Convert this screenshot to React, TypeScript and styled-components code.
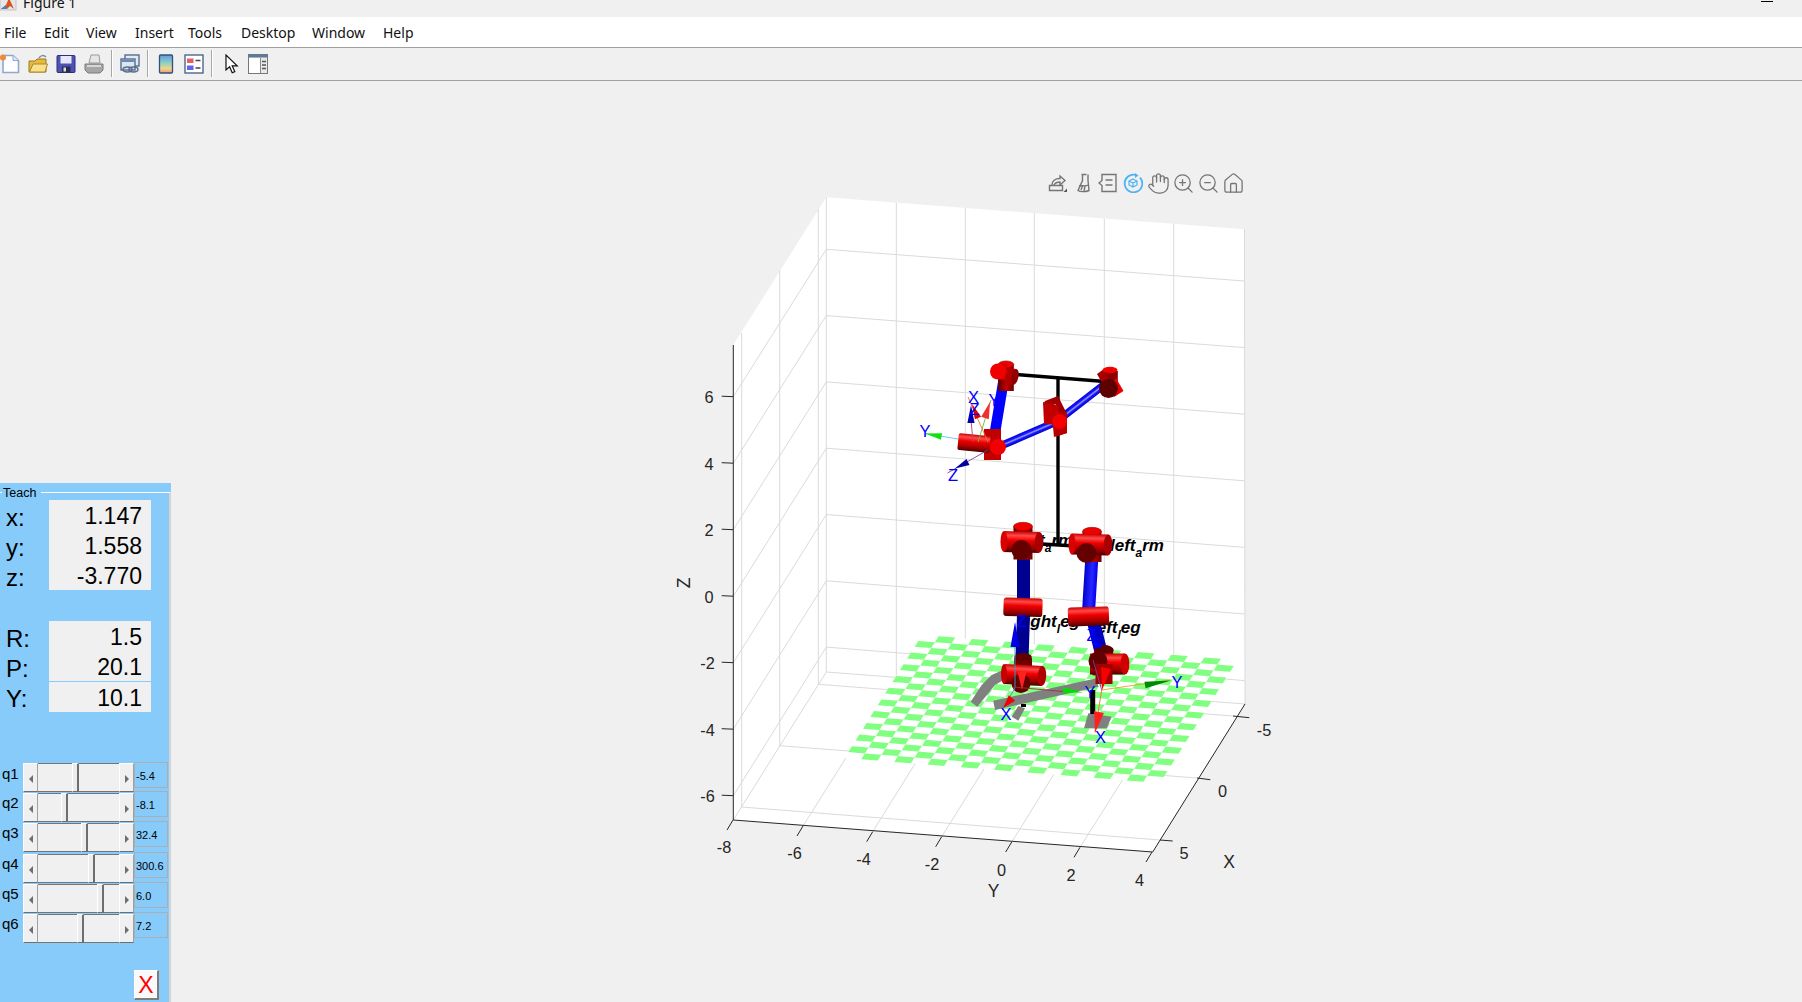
import React from "react";
import styled, { createGlobalStyle } from "styled-components";
import { Hand, House, ZoomIn, ZoomOut } from "lucide-react";

const Global = createGlobalStyle`
  html, body { margin: 0; padding: 0; background: #f0f0f0; overflow: hidden; }
  #root { width: 1802px; height: 1002px; }
`;

const Page = styled.div`
  width: 1802px; height: 1002px; display: flex; flex-direction: column;
  background: #f0f0f0; overflow: hidden; font-family: "Liberation Sans", Arial, sans-serif;
`;
const TitleBar = styled.div`
  height: 17px; flex: none; display: flex; align-items: flex-start; overflow: hidden; background: #f0f0f0;
`;
const TitleIcon = styled.svg` width: 17px; height: 11px; flex: none; `;
const TitleText = styled.span`
  margin: -9px 0 0 6px; font: 14px/24px "Noto Sans", sans-serif; color: #111;
`;
const Minimize = styled.i`
  width: 12px; height: 1px; background: #000; margin: 1px 29px 0 auto; display: block;
`;
const MenuBar = styled.div`
  height: 30px; flex: none; background: #fff; border-bottom: 1px solid #a0a0a0; box-sizing: content-box;
  display: grid; grid-template-columns: 40px 42px 49px 53px 53px 71px 71px 1fr; padding-left: 4px; align-items: center;
`;
const MenuItem = styled.span`
  font: 14px/31px "Noto Sans", sans-serif; color: #111;
`;
const ToolBar = styled.div`
  height: 31px; flex: none; border-bottom: 1px solid #a0a0a0; display: flex; align-items: center; padding: 0 0 1px 0;
  box-sizing: content-box;
`;
const ToolGroup = styled.div<{ $gap: number }>`
  display: flex; gap: ${(p) => p.$gap}px;
`;
const ToolIcon = styled.svg` width: 20px; height: 20px; display: block; `;
const ToolSep = styled.i<{ $l: number; $r: number }>`
  display: block; width: 1px; height: 27px; background: #a8a8a8; border-right: 1px solid #fff;
  margin: 0 ${(p) => p.$r - 1}px 0 ${(p) => p.$l}px;
`;
const Main = styled.div` flex: 1; display: flex; min-height: 0; `;

/* ---------- Teach panel ---------- */
const Panel = styled.section`
  width: 171px; height: 519px; align-self: flex-end; flex: none; background: #87cbfb; position: relative;
  padding-top: 9px; box-sizing: border-box; display: flex;
`;
const PanelLegend = styled.span`
  position: absolute; left: 2px; top: 2px; padding: 0 5px 0 1px; background: #87cbfb;
  font: 12.5px/16px "Liberation Sans", sans-serif; color: #000;
`;
const PanelBody = styled.div`
  flex: 1; border-top: 1px solid #fff; border-right: 2px solid #d4d4d4; padding-top: 7px;
  display: flex; flex-direction: column; box-sizing: border-box;
`;
const Readouts = styled.div<{ $top?: number }>`
  display: grid; grid-template-columns: 49px 102px; margin-top: ${(p) => p.$top ?? 0}px;
`;
const ReadLabel = styled.span`
  font-size: 24px; line-height: 30px; color: #000; padding: 3px 0 0 6px; height: 30px; box-sizing: border-box; overflow: visible;
`;
const ReadValue = styled.span<{ $split?: boolean }>`
  background: #f0f0f0; font-size: 23px; line-height: 32px; height: 30px; text-align: right; padding-right: 9px; color: #000;
  ${(p) => (p.$split ? "margin-top:1px;" : "")}
`;
const SliderRow = styled.div<{ $pitch: number; $off: number }>`
  height: ${(p) => p.$pitch}px; display: grid; grid-template-columns: 23px 111px 34px; align-items: start;
  & > :nth-child(2) { margin-top: ${(p) => p.$off}px; }
`;
const SliderList = styled.div` margin-top: 50px; `;
const SliderLabel = styled.span`
  font-size: 15px; line-height: 20px; padding-left: 2px; margin-top: 2px; color: #000;
`;
const Slider = styled.div`
  height: 29px; display: flex; background: #f0f0f0; box-sizing: border-box;
`;
const SliderBtn = styled.div`
  width: 15px; flex: none; box-sizing: border-box; background: #f0f0f0;
  border: 1px solid; border-color: #fff #a0a0a0 #6e6e6e #fff; display: flex; align-items: center; justify-content: center;
`;
const ArrowL = styled.i`
  border-style: solid; border-width: 4px 4px 4px 0; border-color: transparent #6e6e6e transparent transparent; display: block; margin-top: 2px;
`;
const ArrowR = styled.i`
  border-style: solid; border-width: 4px 0 4px 4px; border-color: transparent transparent transparent #6e6e6e; display: block; margin-top: 2px;
`;
const Track = styled.div`
  flex: 1; position: relative; border-top: 1px solid #757575; border-bottom: 1px solid #757575; box-sizing: border-box;
`;
const Thumb = styled.div<{ $pos: number }>`
  position: absolute; top: -1px; bottom: -1px; left: ${(p) => p.$pos}px; width: 7px; box-sizing: border-box;
  background: #ececec; border-style: solid; border-width: 1px 2px 1px 1px; border-color: #fff #6e6e6e #6e6e6e #fff;
`;
const SliderValue = styled.span`
  height: 26px; border: 1px solid #abafb3; box-sizing: border-box; font-size: 11px; line-height: 26px; padding-left: 1px; color: #000; white-space: nowrap;
`;
const CloseBtn = styled.button`
  margin: 28px 0 0 134px; width: 25px; height: 30px; padding: 0; background: #f9f9f9; box-sizing: border-box;
  border: 1px solid; border-color: #fff #7d7d7d #7d7d7d #fff; border-width: 1px 2px 2px 1px;
  font: 23px/26px "Liberation Sans", sans-serif; color: #ff0000;
`;

/* ---------- plot ---------- */
const PlotArea = styled.div` flex: 1; position: relative; min-width: 0; `;
const PlotSvg = styled.svg` display: block; margin: 79px 0 0 489px; overflow: visible; `;
const AxesToolbar = styled.div`
  position: absolute; left: 877px; top: 92px; display: flex; gap: 5px; align-items: center;
`;
const AxesIcon = styled.svg` width: 20px; height: 20px; display: block; fill: none; stroke: #757575; stroke-width: 1.4; `;
const ActiveAxesIcon = styled(AxesIcon)` stroke: #4db2f5; `;
const lucideSized = `width: 23px; height: 23px; margin: -1.5px; color: #757575; stroke-width: 1.35; display: block;`;
const HandIcon = styled(Hand)`${lucideSized}`;
const ZoomInIcon = styled(ZoomIn)`${lucideSized}`;
const ZoomOutIcon = styled(ZoomOut)`${lucideSized}`;
const HomeIcon = styled(House)`${lucideSized}`;
const TickText = styled.text`
  font: 16.3px "Liberation Sans", sans-serif; fill: #262626; text-anchor: middle; dominant-baseline: central;
`;
const AxisName = styled(TickText)` font-size: 17.5px; `;
const FrameText = styled.text`
  font: 16.5px "Liberation Sans", sans-serif; fill: #0000ff; text-anchor: middle; dominant-baseline: central;
`;
const JointLabel = styled.text`
  font: italic bold 17px "Liberation Sans", sans-serif; fill: #000;
`;

/* geometry */
const A = [844.5, 758];
const U = [(1160 - 844.5) / 19, 25 / 19];
const V = [77.5 / 21, -123 / 21];
const pt = (i: number, j: number) => `${(A[0] + U[0] * i + V[0] * j).toFixed(1)} ${(A[1] + U[1] * i + V[1] * j).toFixed(1)}`;
let boardPath = "";
for (let i = 0; i < 19; i++) for (let j = 0; j < 21; j++) if ((i + j) % 2 === 1)
  boardPath += `M${pt(i, j)}L${pt(i + 1, j)}L${pt(i + 1, j + 1)}L${pt(i, j + 1)}Z`;

const GRID = "#dadada";
const zIdx = [0, 1, 2, 3, 4, 5, 6];
const yBack = (x: number, base: number) => base + ((x - 826) * 32) / 419;
const floorY: [number, number, number, number][] = [
  [803, 826, 896.3, 678], [872.7, 831.7, 965.3, 683], [941.7, 836.7, 1034.3, 688.5], [1011.7, 842, 1104.3, 693.5], [1080, 847.3, 1173.7, 699],
];

type CylP = { x1: number; y1: number; x2: number; y2: number; r: number; g?: string; cap?: string; };
const Cyl = ({ x1, y1, x2, y2, r, g = "url(#redG)", cap }: CylP) => {
  const len = Math.hypot(x2 - x1, y2 - y1);
  const a = (Math.atan2(y2 - y1, x2 - x1) * 180) / Math.PI;
  return (
    <g transform={`translate(${x1} ${y1}) rotate(${a})`}>
      <rect x={0} y={-r} width={len} height={2 * r} fill={g} />
      {cap && <ellipse cx={len} cy={0} rx={r * 0.42} ry={r} fill={cap} />}
    </g>
  );
};
const Disc = ({ x, y, r, f }: { x: number; y: number; r: number; f: string }) => <circle cx={x} cy={y} r={r} fill={f} />;
const Cone = ({ x1, y1, x2, y2, r, f }: { x1: number; y1: number; x2: number; y2: number; r: number; f: string }) => {
  const l = Math.hypot(x2 - x1, y2 - y1);
  const nx = (-(y2 - y1) / l) * r, ny = ((x2 - x1) / l) * r;
  return <polygon points={`${x1 + nx},${y1 + ny} ${x2},${y2} ${x1 - nx},${y1 - ny}`} fill={f} />;
};
const Thin = ({ d, c }: { d: string; c: string }) => <path d={d} stroke={c} strokeWidth={0.9} fill="none" />;

/* the four-way robot joint used at the shoulders of the lower body */
const CrossJoint = ({ x, y, capY, discX, discY, l, r }: { x: number; y: number; capY: number; discX: number; discY: number; l: number; r: number }) => (
  <g>
    <Cyl x1={x} y1={y + 18} x2={x} y2={capY} r={9.5} g="url(#darkV)" />
    <ellipse cx={x} cy={capY} rx={9.5} ry={4.2} fill="#f00000" stroke="#800000" strokeWidth={0.5} />
    <Cyl x1={l} y1={y} x2={r} y2={y + 1} r={10.5} cap="#a80000" />
    <ellipse cx={l} cy={y} rx={3.5} ry={10.5} fill="#d80000" />
    <Disc x={discX} y={discY} r={10} f="#640000" />
  </g>
);

const Plot = () => (
  <PlotSvg width={640} height={760} viewBox="660 160 640 760">
    <defs>
      <linearGradient id="redG" x1="0" y1="0" x2="0" y2="1">
        <stop offset="0" stopColor="#c80000" /><stop offset="0.2" stopColor="#ff4a4a" /><stop offset="0.42" stopColor="#f00000" /><stop offset="0.8" stopColor="#960000" /><stop offset="1" stopColor="#4a0000" />
      </linearGradient>
      <linearGradient id="darkV" x1="0" y1="0" x2="0" y2="1">
        <stop offset="0" stopColor="#600000" /><stop offset="0.55" stopColor="#c00000" /><stop offset="1" stopColor="#700000" />
      </linearGradient>
      <linearGradient id="blueG" x1="0" y1="0" x2="0" y2="1">
        <stop offset="0" stopColor="#0000d8" /><stop offset="0.32" stopColor="#1818ff" /><stop offset="0.5" stopColor="#9a9aff" /><stop offset="0.68" stopColor="#1818ff" /><stop offset="1" stopColor="#0000c0" />
      </linearGradient>
      <linearGradient id="blueS" x1="0" y1="0" x2="0" y2="1">
        <stop offset="0" stopColor="#0000f0" /><stop offset="0.4" stopColor="#2828ff" /><stop offset="1" stopColor="#0000d0" />
      </linearGradient>
    </defs>

    {/* walls and floor */}
    <polygon points="733.3,345 826.3,197.3 1244,229.3 1245,704 1152.7,852 733.3,820" fill="#fff" />
    <g stroke={GRID} strokeWidth={1} fill="none">
      <line x1={826.3} y1={197.3} x2={826.3} y2={672} />
      <line x1={826.3} y1={672} x2={733.3} y2={820} />
      <line x1={826.3} y1={672} x2={1245} y2={704} />
      <line x1={1244.5} y1={229.3} x2={1245} y2={704} />
      {zIdx.map((k) => (
        <path key={k} d={`M733.3 ${396.7 + 66.5 * k}L826.3 ${249.3 + 66.3 * k}L1244.5 ${281 + 66.6 * k}`} />
      ))}
      {[896.3, 965.3, 1034.3, 1104.3, 1173.7].map((x) => (
        <line key={x} x1={x} y1={yBack(x, 197.3)} x2={x} y2={yBack(x, 672)} />
      ))}
      <line x1={741.7} y1={333} x2={741.7} y2={807} />
      <line x1={779.7} y1={270} x2={779.7} y2={745.7} />
      <line x1={818.3} y1={209} x2={818.3} y2={684.3} />
      <line x1={741.7} y1={807} x2={1160} y2={840} />
      <line x1={779.7} y1={745.7} x2={1197} y2={778} />
      <line x1={818.3} y1={684.3} x2={1233} y2={716} />
      {floorY.map((l, i) => <line key={i} x1={l[0]} y1={l[1]} x2={l[2]} y2={l[3]} />)}
    </g>

    {/* axes */}
    <g stroke="#262626" strokeWidth={1} fill="none">
      <line x1={733.3} y1={345} x2={733.3} y2={820} />
      <line x1={733.3} y1={820} x2={1152.7} y2={852} />
      <line x1={1152.7} y1={852} x2={1245} y2={704} />
      {zIdx.map((k) => <line key={k} x1={721.7} y1={396.2 + 66.5 * k} x2={733.3} y2={396.7 + 66.5 * k} />)}
      {[[733, 820], [803, 826], [872.7, 831.7], [941.7, 836.7], [1011.7, 842], [1080, 847.3], [1152, 852]].map((t) => (
        <line key={t[0]} x1={t[0]} y1={t[1]} x2={t[0] - 6} y2={t[1] + 10} />
      ))}
      <line x1={1233} y1={716} x2={1249.3} y2={717.7} />
      <line x1={1197} y1={778} x2={1210.3} y2={779.7} />
      <line x1={1160} y1={840} x2={1172.7} y2={841} />
    </g>
    {[["6", 709, 396.5], ["4", 709, 463.5], ["2", 709, 530], ["0", 709, 596.5], ["-2", 707.5, 663], ["-4", 707.5, 729.5], ["-6", 707.5, 796]].map(([t, x, y]) => (
      <TickText key={t} x={x} y={y}>{t}</TickText>
    ))}
    {[["-8", 724, 847], ["-6", 794.5, 852.5], ["-4", 863.5, 858.5], ["-2", 932, 863.5], ["0", 1001.5, 869.5], ["2", 1071, 874.5], ["4", 1139.5, 879.5]].map(([t, x, y]) => (
      <TickText key={t} x={x} y={y}>{t}</TickText>
    ))}
    {[["-5", 1264, 730], ["0", 1222.5, 791], ["5", 1184, 852.5]].map(([t, x, y]) => (
      <TickText key={t} x={x} y={y}>{t}</TickText>
    ))}
    <AxisName x={993.5} y={890.5}>Y</AxisName>
    <AxisName x={1229} y={861.5}>X</AxisName>
    <AxisName x={683.5} y={583} transform="rotate(-90 683.5 583)">Z</AxisName>

    {/* ground */}
    <polygon points="844.5,758 922,635 1237.5,660.7 1160,783" fill="#fff" />
    <path d={boardPath} fill="#80ff80" />

    {/* feet */}
    <g fill="#808080">
      <polygon points="970.7,701.7 977.3,706.7 995,685 1005,679.3 1003,670 991.7,675 981.7,685" />
      <polygon points="993.3,700.7 995,710 1098.3,686.7 1096.7,678.3" />
      <polygon points="1011.7,716.7 1018.3,720.7 1025,708.3 1018.3,706" />
      <polygon points="1084,728.3 1106.7,728.3 1111.7,716.7 1088.3,713.3" />
    </g>
    <rect x={1090.2} y={690} width={5} height={24} fill="#000" />
    <rect x={1021} y={704} width={5} height={3} fill="#000" />

    {/* black skeleton */}
    <g stroke="#000" strokeWidth={3.4} fill="none">
      <line x1={1010} y1={374} x2={1108} y2={381.7} />
      <line x1={1058} y1={378} x2={1058} y2={545} />
      <line x1={1025} y1={543} x2={1092} y2={547} />
    </g>

    {/* labels behind the joints */}
    <JointLabel x={1007} y={546}>right<tspan dy={6} fontSize={12}>a</tspan><tspan dy={-6}>rm</tspan></JointLabel>
    <JointLabel x={1110} y={551}>left<tspan dy={6} fontSize={12}>a</tspan><tspan dy={-6}>rm</tspan></JointLabel>
    <JointLabel x={1019} y={627}>right<tspan dy={6} fontSize={12}>l</tspan><tspan dy={-6}>eg</tspan></JointLabel>
    <JointLabel x={1092} y={633}>left<tspan dy={6} fontSize={12}>l</tspan><tspan dy={-6}>eg</tspan></JointLabel>

    {/* upper arm links */}
    <Cyl x1={1004} y1={378} x2={995} y2={432} r={5.3} g="#0000ff" />
    <Cyl x1={998} y1={447} x2={1056} y2={422} r={3.9} g="url(#blueG)" />
    <Cyl x1={1056} y1={422} x2={1105} y2={384} r={3.9} g="url(#blueG)" />

    {/* shoulder */}
    <Cyl x1={1006} y1={391} x2={1006} y2={365} r={7.8} g="url(#darkV)" />
    <ellipse cx={1006} cy={364.5} rx={7.8} ry={3.6} fill="#f00000" stroke="#700000" strokeWidth={0.5} />
    <Cyl x1={1006} y1={375} x2={1015} y2={377} r={8} g="#b00000" cap="#900000" />
    <Cyl x1={1006} y1={372} x2={999} y2={371} r={8} g="#d80000" />
    <Disc x={998} y={371.5} r={8} f="#f00000" />

    {/* hand end */}
    <Cyl x1={1110} y1={390} x2={1110} y2={371} r={7.8} g="#8a0000" />
    <polygon points="1097,374 1104,369 1109,380 1102,383" fill="#a80000" />
    <ellipse cx={1110} cy={370} rx={7.5} ry={3.3} fill="#f00000" />
    <polygon points="1116,378 1123.5,391 1114,397 1108,388" fill="#e80000" />
    <Disc x={1108.5} y={388.5} r={9.5} f="#5c0000" />

    {/* mid */}
    <polygon points="1043,405 1056,404 1058,436 1067,433 1067,414 1058,396 1045,401" fill="#a00000" />
    <polygon points="1043,402 1058,405 1061,425 1044,424" fill="#c00000" />
    <polygon points="1052,416 1067,412 1067,433 1054,437" fill="#b80000" />
    <Disc x={1059.5} y={421.5} r={7.5} f="#f40000" />

    {/* elbow */}
    <Cyl x1={992.5} y1={429} x2={992.5} y2={460} r={8.5} g="#c00000" />
    <g transform="rotate(5.5 974 443)">
      <rect x={958} y={434.5} width={32} height={17} fill="url(#redG)" rx={2} />
    </g>
    <Disc x={998} y={447} r={8} f="#f00000" />

    {/* elbow frame */}
    <Thin d="M988 450L947.5 473" c="#8040a0" />
    <Thin d="M958 439L925 433.5" c="#50c8ff" />
    <Thin d="M973 442L971 420" c="#c04060" />
    <Thin d="M978 442L991 400" c="#70b040" />
    <Thin d="M988 442L968 397" c="#f07030" />
    <Cone x1={941.5} y1={436.5} x2={925} y2={433.5} r={3.4} f="#10e010" />
    <Cone x1={968} y1={462} x2={955} y2={468.5} r={3.4} f="#0000a0" />
    <Cone x1={971} y1={423} x2={971} y2={405} r={3.6} f="#0000b0" />
    <Cone x1={978} y1={418} x2={972} y2={404} r={3.4} f="#e00000" />
    <Cone x1={985} y1={418} x2={990} y2={402} r={4} f="#f03030" />
    <FrameText x={925} y={431}>Y</FrameText>
    <FrameText x={953} y={475}>Z</FrameText>
    <FrameText x={973.5} y={397}>X</FrameText>
    <FrameText x={974.5} y={409}>Z</FrameText>
    <FrameText x={994} y={400}>Y</FrameText>

    {/* right leg */}
    <Cyl x1={1023.5} y1={555} x2={1023.5} y2={605} r={6.5} g="#000090" />
    <Cyl x1={1023.5} y1={615} x2={1022} y2={660} r={6.5} g="#000090" />
    <CrossJoint x={1023} y={541.5} capY={526.5} discX={1021.5} discY={550} l={1004} r={1039} />
    <g transform="rotate(2 1023 607)"><rect x={1003.5} y={598} width={39} height={18.5} rx={3} fill="url(#redG)" /></g>
    <Cyl x1={1023} y1={680} x2={1023} y2={658} r={9} g="#700000" />
    <ellipse cx={1023} cy={657} rx={8.8} ry={4} fill="#600000" />
    <Cyl x1={1004} y1={674} x2={1042} y2={676} r={10} cap="#b00000" />
    <ellipse cx={1004} cy={674} rx={3} ry={10} fill="#c80000" />
    <Disc x={1021} y={683.5} r={9.5} f="#640000" />
    <Thin d="M1015 647L1015 688L1002 710" c="#30a0d0" />
    <Thin d="M1013 687L1063 691.5" c="#a03030" />
    <Cone x1={1015} y1={647} x2={1015} y2={622} r={4.5} f="#0000e8" />
    <Cone x1={1063} y1={690} x2={1083} y2={692.5} r={2.8} f="#00e000" />
    <Cone x1={1012} y1={698} x2={1003} y2={708} r={4.2} f="#f00000" />
    <Cone x1={1022} y1={672} x2={1022} y2={690} r={4.5} f="#ff2020" />
    <FrameText x={1021.5} y={621}>Z</FrameText>
    <FrameText x={1090} y={692}>Y</FrameText>
    <FrameText x={1006} y={714}>X</FrameText>

    {/* left leg */}
    <Cyl x1={1092} y1={555} x2={1088.5} y2={612} r={6.5} g="url(#blueS)" />
    <Cyl x1={1093} y1={620} x2={1103} y2={660} r={6.5} g="#0000c0" />
    <CrossJoint x={1092} y={544} capY={531.5} discX={1086.5} discY={553} l={1072} r={1108} />
    <g transform="rotate(-2 1088 617)"><rect x={1068} y={607} width={41} height={19} rx={3} fill="url(#redG)" /></g>
    <Cyl x1={1102} y1={676} x2={1104} y2={648} r={9.5} g="#800000" />
    <ellipse cx={1104} cy={650} rx={9.5} ry={5} fill="#5a0000" />
    <Cyl x1={1090} y1={664} x2={1125} y2={664} r={10.5} g="url(#redG)" cap="#d00000" />
    <Disc x={1098} y={661} r={9.5} f="#600000" />
    <Cyl x1={1104} y1={684} x2={1104} y2={664} r={8.5} g="#a00000" />
    <Thin d="M1101.7 690L1093 660" c="#8040a0" />
    <Thin d="M1101.7 690L1170 680" c="#e8a020" />
    <Thin d="M1101.7 690L1095 732" c="#f07030" />
    <Cone x1={1098} y1={648} x2={1091} y2={627} r={4.3} f="#0000e8" />
    <Cone x1={1145} y1={685} x2={1171} y2={680.5} r={3.2} f="#008800" />
    <Cone x1={1099} y1={712} x2={1095} y2={733} r={5} f="#ff2020" />
    <Cone x1={1106} y1={668} x2={1102} y2={690} r={5} f="#f80000" />
    <FrameText x={1091.5} y={635}>Z</FrameText>
    <FrameText x={1177} y={682}>Y</FrameText>
    <FrameText x={1100.5} y={736.5}>X</FrameText>
  </PlotSvg>
);

const sliders = [
  { n: "q1", pos: 34, v: "-5.4", pitch: 29, off: 1 },
  { n: "q2", pos: 23, v: "-8.1", pitch: 30, off: 2 },
  { n: "q3", pos: 43, v: "32.4", pitch: 31, off: 2 },
  { n: "q4", pos: 49.5, v: "300.6", pitch: 30, off: 2 },
  { n: "q5", pos: 58.5, v: "6.0", pitch: 30, off: 2 },
  { n: "q6", pos: 39, v: "7.2", pitch: 30, off: 2 },
];

export default function App() {
  return (
    <Page>
      <Global />
      <TitleBar>
        <TitleIcon viewBox="0 0 17 11">
          <rect x="0" y="-3" width="16" height="13" fill="#e6e6e6" stroke="#c4c4c4" />
          <polygon points="1,9 6,5 9,-2 14,9 10,6 7,9" fill="#d9541e" />
          <polygon points="1,9 6,5 7,9 4,9" fill="#4a7fc0" />
        </TitleIcon>
        <TitleText>Figure 1</TitleText>
        <Minimize />
      </TitleBar>
      <MenuBar>
        {["File", "Edit", "View", "Insert", "Tools", "Desktop", "Window", "Help"].map((m) => <MenuItem key={m}>{m}</MenuItem>)}
      </MenuBar>
      <ToolBar>
        <ToolGroup $gap={8}>
          <ToolIcon viewBox="0 0 20 20">
            <path d="M3 1.5h10l5.5 5v12H3z" fill="#fff" stroke="#8ea8d0" strokeWidth="1.6" />
            <path d="M13 1.5v5h5.5" fill="#dfe8f6" stroke="#8ea8d0" />
            <circle cx="3" cy="3.5" r="3" fill="#f0893a" />
          </ToolIcon>
          <ToolIcon viewBox="0 0 20 20">
            <path d="M1 7h6l2-2h9v13H1z" fill="#e8b93a" stroke="#9a7b20" />
            <path d="M1.5 18L5 10h14.5L17 18z" fill="#fbe08a" stroke="#a8882c" />
            <path d="M11 4c2-3 5-3 7-1" stroke="#7a8ba0" strokeWidth="1.5" fill="none" />
          </ToolIcon>
          <ToolIcon viewBox="0 0 20 20">
            <rect x="1" y="1.5" width="18" height="17" rx="1" fill="#4d52b8" stroke="#2d2f77" />
            <rect x="4.5" y="2" width="11" height="7.5" fill="#e6e8fa" />
            <rect x="6" y="12.5" width="8.5" height="6" fill="#2c2c48" />
            <rect x="7.5" y="13.5" width="2.5" height="4" fill="#dcdcdc" />
          </ToolIcon>
          <ToolIcon viewBox="0 0 20 20">
            <path d="M5 9l2-8h8l1 8z" fill="#e6e6e6" stroke="#999" />
            <path d="M1 10h18v6l-3 3H4l-3-3z" fill="#a6a6a6" stroke="#7a7a7a" />
            <rect x="3" y="11" width="14" height="2" fill="#d6d6d6" />
          </ToolIcon>
        </ToolGroup>
        <ToolSep $l={7} $r={8} />
        <ToolIcon viewBox="0 0 20 20">
          <rect x="5" y="1" width="14" height="11" fill="#e4eaf2" stroke="#46648c" strokeWidth="1.3" />
          <rect x="1" y="5" width="14" height="11" fill="#dde5ef" stroke="#46648c" strokeWidth="1.3" />
          <rect x="2" y="6" width="12" height="2" fill="#6c8cb4" />
          <ellipse cx="7.5" cy="15.5" rx="4.5" ry="2.4" fill="none" stroke="#5a6f8c" strokeWidth="1.5" />
          <ellipse cx="13.5" cy="15.5" rx="4.5" ry="2.4" fill="none" stroke="#5a6f8c" strokeWidth="1.5" />
        </ToolIcon>
        <ToolSep $l={7} $r={8} />
        <ToolGroup $gap={8}>
          <ToolIcon viewBox="0 0 20 20">
            <defs>
              <linearGradient id="cbar" x1="0" y1="0" x2="0" y2="1">
                <stop offset="0" stopColor="#5f9ae6" /><stop offset="0.45" stopColor="#8fd2c0" /><stop offset="0.75" stopColor="#f0d68a" /><stop offset="1" stopColor="#e8987a" />
              </linearGradient>
            </defs>
            <rect x="3.5" y="1" width="13" height="18" rx="1" fill="url(#cbar)" stroke="#34507a" strokeWidth="1.3" />
          </ToolIcon>
          <ToolIcon viewBox="0 0 20 20">
            <rect x="1" y="1" width="18" height="18" fill="#fff" stroke="#3f5a86" strokeWidth="1.3" />
            <rect x="3" y="4.5" width="6.5" height="4.5" fill="#e66060" />
            <rect x="3" y="11.5" width="6.5" height="4.5" fill="#6464e4" />
            <path d="M11.5 6.5h5M11.5 14h5" stroke="#444" strokeWidth="1.4" />
          </ToolIcon>
        </ToolGroup>
        <ToolSep $l={7} $r={10} />
        <ToolGroup $gap={6}>
          <ToolIcon viewBox="0 0 20 20">
            <path d="M4 1v15l3.6-3.2 2.6 6 2.6-1.2-2.6-5.8h5z" fill="#fff" stroke="#111" strokeWidth="1.2" />
          </ToolIcon>
          <ToolIcon viewBox="0 0 20 20">
            <rect x="0.5" y="0.5" width="19" height="19" fill="#e8e8e8" stroke="#777" />
            <rect x="0.5" y="0.5" width="19" height="3" fill="#5d7a98" />
            <rect x="1" y="4" width="11" height="15" fill="#fff" />
            <path d="M14 7.5h4M14 11h4M14 14.5h4" stroke="#555" strokeWidth="1.6" />
            <path d="M12.5 4v15" stroke="#888" />
          </ToolIcon>
        </ToolGroup>
      </ToolBar>
      <Main>
        <Panel>
          <PanelLegend>Teach</PanelLegend>
          <PanelBody>
            <Readouts>
              <ReadLabel>x:</ReadLabel><ReadValue>1.147</ReadValue>
              <ReadLabel>y:</ReadLabel><ReadValue>1.558</ReadValue>
              <ReadLabel>z:</ReadLabel><ReadValue>-3.770</ReadValue>
            </Readouts>
            <Readouts $top={31}>
              <ReadLabel>R:</ReadLabel><ReadValue>1.5</ReadValue>
              <ReadLabel>P:</ReadLabel><ReadValue>20.1</ReadValue>
              <ReadLabel>Y:</ReadLabel><ReadValue $split>10.1</ReadValue>
            </Readouts>
            <SliderList>
              {sliders.map((s) => (
                <SliderRow key={s.n} $pitch={s.pitch} $off={s.off}>
                  <SliderLabel>{s.n}</SliderLabel>
                  <Slider>
                    <SliderBtn><ArrowL /></SliderBtn>
                    <Track><Thumb $pos={s.pos} /></Track>
                    <SliderBtn><ArrowR /></SliderBtn>
                  </Slider>
                  <SliderValue>{s.v}</SliderValue>
                </SliderRow>
              ))}
            </SliderList>
            <CloseBtn>X</CloseBtn>
          </PanelBody>
        </Panel>
        <PlotArea>
          <Plot />
          <AxesToolbar>
            <AxesIcon viewBox="0 0 20 20">
              <path d="M1.5 12.5h13v5h-13z" />
              <path d="M4 12c0-4 3-6.5 8-6.5V3l5 4.5-5 4.5V9c-3 0-5 1-6 3" />
              <path d="M15.5 19l3.5-3.5V19z" fill="#555" stroke="none" />
            </AxesIcon>
            <AxesIcon viewBox="0 0 20 20">
              <path d="M8.5 1.5h5M9.5 1.5v6L5 17.5c2 1.5 8 1.5 11 0l-1-10v-6" />
              <path d="M6 13c3-1 6 1 9-1" />
              <path d="M8 17l1.5-4M11 18l1-5" />
            </AxesIcon>
            <AxesIcon viewBox="0 0 20 20">
              <path d="M4 1.5h14v17H4v-6L1 10l3-2.5z" />
              <path d="M7.5 7h7M7.5 12h7" />
            </AxesIcon>
            <ActiveAxesIcon viewBox="0 0 20 20">
              <path d="M17 4.5a8.8 8.8 0 1 1-4-2.5" strokeWidth="1.8" />
              <path d="M12 0l3.5 2.5L12 5z" fill="#4db2f5" stroke="none" />
              <path d="M10 6l4 2v4l-4 2-4-2V8zM6 8l4 2 4-2M10 10v4" strokeWidth="1.2" />
            </ActiveAxesIcon>
            <HandIcon />
            <ZoomInIcon />
            <ZoomOutIcon />
            <HomeIcon />
          </AxesToolbar>
        </PlotArea>
      </Main>
    </Page>
  );
}
